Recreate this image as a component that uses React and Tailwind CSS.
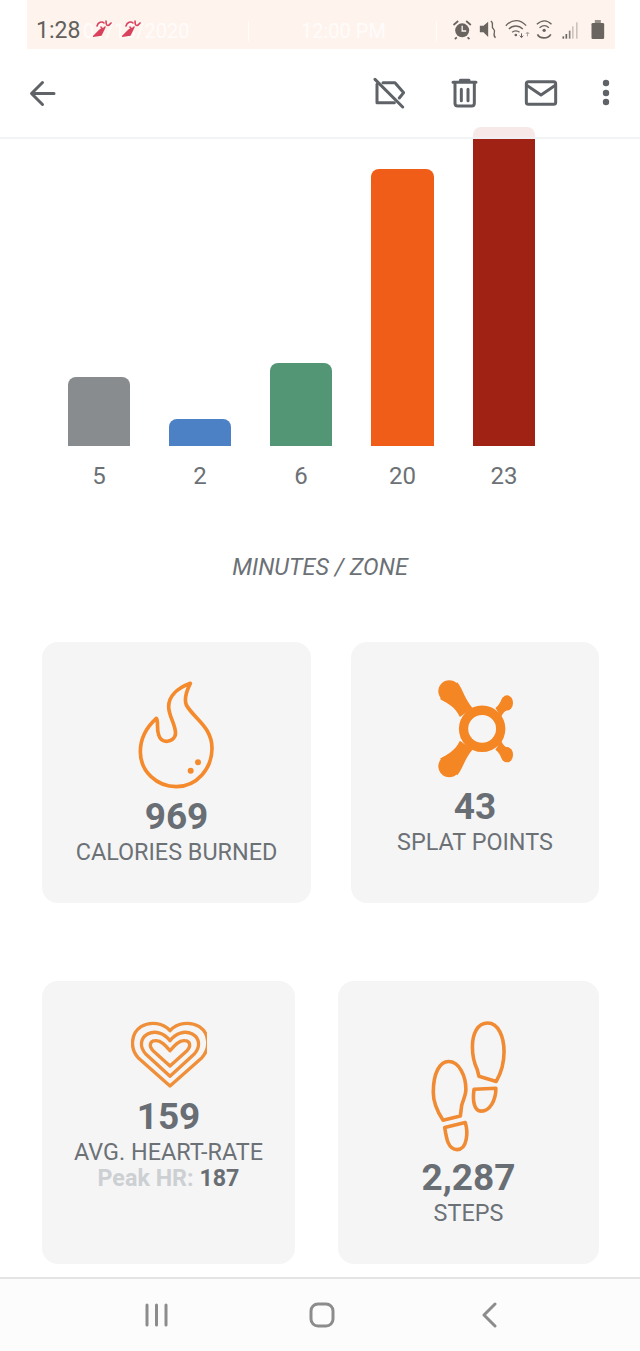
const bars = [
  { value: 5, height: "h-[69px]", width: "w-[62px]", color: "bg-[#888c8f]" },
  { value: 2, height: "h-[27px]", width: "w-[62px]", color: "bg-[#4c81c6]" },
  { value: 6, height: "h-[83px]", width: "w-[62px]", color: "bg-[#529676]" },
  { value: 20, height: "h-[277px]", width: "w-[63px]", color: "bg-[#f05d19]" },
  { value: 23, height: "h-[319px]", width: "w-[62px]", color: "bg-[#a02214]" },
];

function Runner() {
  return (
    <svg width="19" height="17" viewBox="0 0 19 17" fill="none" stroke="#d9415c" strokeWidth="1.6" strokeLinecap="round">
      <path d="M1 16 L7 10 L11 9 L8 15 Z" fill="#d9415c" />
      <path d="M4 6 C5 2 9 1 11 3 M8 7 C8 9 11 9 12 7 M13 1 C13 6 15 7 18 3" />
    </svg>
  );
}

function StatusIcons() {
  return (
    <svg width="157" height="24" viewBox="395 55 470 72" fill="#6a6460">
      <circle cx="428" cy="92" r="21" />
      <path d="M428 78 V94 H440" stroke="#fef3ed" strokeWidth="4" fill="none" />
      <path d="M402 76 L416 64 M454 76 L440 64 M412 113 L406 118 M444 113 L450 118" stroke="#6a6460" strokeWidth="5" />
      <path d="M481 78 H492 L506 66 V112 L492 98 H481 Z" />
      <path d="M514 64 C526 72 512 80 522 88 C532 96 516 104 528 114" stroke="#6a6460" strokeWidth="4" fill="none" />
      <g stroke="#6a6460" strokeWidth="4" fill="none">
        <path d="M559 78 C578 58 602 58 620 78 M568 88 C580 76 598 76 610 88 M578 98 C584 92 594 92 600 98" />
        <path d="M652 74 C668 60 682 60 696 74 M660 84 C670 76 680 76 688 84" />
        <path d="M654 104 C660 118 686 118 694 104" strokeWidth="5" />
      </g>
      <circle cx="589" cy="106" r="4" />
      <path d="M606 101 V113 M601 108 L606 114 L611 108" stroke="#6a6460" strokeWidth="3" fill="none" />
      <path d="M624 110 V98 M619 103 L624 97 L629 103" stroke="#a9a5a1" strokeWidth="3" fill="none" />
      <circle cx="674" cy="92" r="5" />
      <rect x="729" y="110" width="5" height="7" />
      <rect x="738" y="103" width="5" height="14" />
      <rect x="748" y="93" width="5" height="24" opacity="0.8" />
      <rect x="758" y="80" width="4" height="37" opacity="0.4" />
      <rect x="770" y="68" width="4" height="49" opacity="0.4" />
      <rect x="816" y="70" width="38" height="48" rx="4" />
      <rect x="826" y="61" width="18" height="9" opacity="0.7" />
    </svg>
  );
}

function BackIcon() {
  return (
    <svg width="27" height="27" viewBox="0 0 27 27" fill="none" stroke="#5f6368" strokeWidth="3" strokeLinecap="round" strokeLinejoin="round">
      <path d="M25 13.5 H3 M13.5 2.5 L2.5 13.5 L13.5 24.5" />
    </svg>
  );
}

function LabelOffIcon() {
  return (
    <svg width="32" height="32" viewBox="158 234 96 96" fill="none" stroke="#5f6368" strokeWidth="9" strokeLinecap="round" strokeLinejoin="round">
      <path d="M188 251 H224 L250 281 L237 297 M222 311 H170 V256" />
      <path d="M164 241 L247 324" />
    </svg>
  );
}

function TrashIcon() {
  return (
    <svg width="28" height="32" viewBox="394 234 84 96" fill="none" stroke="#5f6368" strokeWidth="9" strokeLinecap="round" strokeLinejoin="round">
      <path d="M400 247 H469 M422 241 H448" />
      <path d="M406 250 V310 Q406 318 414 318 H456 Q464 318 464 310 V250" />
      <path d="M425 268 V302 M445 268 V302" />
    </svg>
  );
}

function MailIcon() {
  return (
    <svg width="34" height="28" viewBox="610 238 102 84" fill="none" stroke="#5f6368" strokeWidth="9" strokeLinejoin="round">
      <rect x="617" y="246" width="88" height="68" rx="6" />
      <path d="M618 257 L661 286 L704 257" />
    </svg>
  );
}

function MoreIcon() {
  return (
    <svg width="8" height="28" viewBox="0 0 8 28" fill="#5f6368">
      <circle cx="4" cy="4" r="3.2" />
      <circle cx="4" cy="14" r="3.2" />
      <circle cx="4" cy="23" r="3.2" />
    </svg>
  );
}

function FlameIcon() {
  return (
    <svg width="80" height="110" viewBox="320 120 240 330" fill="none" stroke="#f58a2c" strokeWidth="11" strokeLinejoin="round">
      <path d="M480 130 C440 145 415 170 415 200 C415 230 440 260 435 285 C430 305 395 315 385 285 C378 265 385 245 378 235 C345 265 330 295 330 335 C330 395 380 440 438 440 C500 440 545 385 545 325 C545 260 490 235 468 195 C460 175 470 150 480 130 Z" />
      <circle cx="503" cy="367" r="9" fill="#f58a2c" stroke="none" />
      <circle cx="481" cy="392" r="9" fill="#f58a2c" stroke="none" />
    </svg>
  );
}

function SplatIcon() {
  return (
    <svg width="83" height="107" viewBox="280 110 250 320" fill="#f58624">
      <circle cx="425" cy="268" r="56" fill="none" stroke="#f58624" strokeWidth="28" />
      <circle cx="326" cy="155" r="33" />
      <path d="M350 128 C368 150 372 178 396 205 L358 232 C342 200 322 192 298 178 Z" />
      <circle cx="326" cy="381" r="33" />
      <path d="M350 408 C368 386 372 358 396 331 L358 304 C342 336 322 344 298 358 Z" />
      <ellipse cx="500" cy="190" rx="18" ry="23" />
      <path d="M488 172 C480 185 478 195 465 205 L482 232 C490 215 498 212 512 205 Z" />
      <ellipse cx="500" cy="346" rx="18" ry="23" />
      <path d="M488 364 C480 351 478 341 465 331 L482 304 C490 321 498 324 512 331 Z" />
    </svg>
  );
}

function HeartIcon() {
  return (
    <svg width="76" height="68" viewBox="15 10 228 204" fill="none" stroke="#ef8f39" strokeWidth="10" strokeLinejoin="round">
      <path d="M132 208 L38 125 C10 95 15 50 45 30 C75 12 112 20 132 42 C152 20 190 12 220 30 C250 50 255 95 226 125 Z" />
      <path d="M132 179 L60 113 C40 92 42 65 65 52 C88 40 115 50 132 72 C149 50 176 40 199 52 C222 65 224 92 204 113 Z" />
      <path d="M132 148 L82 103 C67 88 72 72 88 72 C105 70 120 88 132 102 C144 88 159 70 176 72 C192 72 197 88 182 103 Z" />
    </svg>
  );
}

function StepsIcon() {
  return (
    <svg width="75" height="132" viewBox="298 132 230 396" fill="none" stroke="#f08a33" strokeWidth="11" strokeLinejoin="round">
      <path d="M335 435 C325 420 305 390 305 350 C305 290 325 255 352 255 C385 255 405 300 405 340 C405 360 395 375 392 390 L388 422 Z" />
      <path d="M340 457 L403 442 C412 470 410 525 378 525 C350 525 345 490 340 457 Z" />
      <path d="M445 300 L440 280 C430 260 425 240 425 210 C425 170 440 137 472 137 C505 137 522 180 522 225 C522 260 510 295 498 316 Z" />
      <path d="M430 340 L497 337 C497 375 478 407 452 407 C430 407 425 375 430 340 Z" />
    </svg>
  );
}

function StatCard({ className, numberClass, icon, value, label, children }) {
  return (
    <div className={`flex flex-col items-center rounded-[16px] bg-[#f5f5f6] ${className}`}>
      {icon}
      <p className={`text-[37px] leading-[42px] font-bold text-[#686e74] ${numberClass}`}>{value}</p>
      <p className="text-[23.4px] leading-[28px] text-[#6c7176]">{label}</p>
      {children}
    </div>
  );
}

export default function App() {
  return (
    <div className="flex h-[1351px] w-[640px] flex-col overflow-hidden bg-white font-['Roboto',sans-serif]">
      <div className="h-[49px] shrink-0 pr-[25px] pl-[27px]">
        <div className="flex h-full items-center bg-[#fef3ed] pt-[13px] pl-[9px] whitespace-nowrap text-white">
          <span className="w-[47px] text-[23px] text-[#625f5d]">1:28</span>
          <div className="relative w-[165px] text-[20px]">
            <span className="opacity-80">01/13/2020</span>
            <div className="absolute top-[4px] left-[10px] flex gap-[10px]">
              <Runner />
              <Runner />
            </div>
          </div>
          <div className="h-[20px] w-px bg-white/70" />
          <span className="ml-[52px] w-[83px] text-[20px] opacity-80">12:00 PM</span>
          <div className="ml-[52px] h-[20px] w-px bg-white/70" />
          <div className="ml-[14px] -translate-y-[1px]">
            <StatusIcons />
          </div>
        </div>
      </div>

      <header className="relative z-10 flex h-[90px] shrink-0 items-center border-b-2 border-[#eef0f2]/80 bg-white/90 pr-[30px] pl-[29px]">
        <BackIcon />
        <div className="ml-auto flex items-center">
          <LabelOffIcon />
          <div className="ml-[46px] translate-y-[1px]"><TrashIcon /></div>
          <div className="ml-[45px]"><MailIcon /></div>
          <div className="ml-[44px]"><MoreIcon /></div>
        </div>
      </header>

      <div className="-mt-[12px] flex h-[319px] shrink-0 items-end gap-[39px] pl-[68px]">
        {bars.map((bar) => (
          <div key={bar.value} className={`rounded-t-[8px] ${bar.height} ${bar.width} ${bar.color}`} />
        ))}
      </div>
      <div className="mt-[15px] flex gap-[39px] pl-[68px]">
        {bars.map((bar) => (
          <span key={bar.value} className={`text-center text-[24px] leading-[30px] text-[#6c7176] ${bar.width}`}>
            {bar.value}
          </span>
        ))}
      </div>
      <p className="mt-[61px] text-center text-[23.4px] leading-[30px] text-[#6c7176] italic">MINUTES / ZONE</p>

      <div className="mt-[60px] flex gap-[40px] pl-[42px]">
        <StatCard className="h-[261px] w-[269px] pt-[38px]" numberClass="mt-[6px]" icon={<FlameIcon />} value="969" label="CALORIES BURNED" />
        <StatCard className="h-[261px] w-[248px] pt-[34px]" numberClass="mt-[3px]" icon={<SplatIcon />} value="43" label="SPLAT POINTS" />
      </div>

      <div className="mt-[78px] flex gap-[43px] pl-[42px]">
        <StatCard className="h-[283px] w-[253px] pt-[39px]" numberClass="mt-[8px]" icon={<HeartIcon />} value="159" label="AVG. HEART-RATE">
          <p className="text-[23.3px] leading-[25px] font-bold text-[#cdd0d3]">
            Peak HR: <span className="text-[#686e74]">187</span>
          </p>
        </StatCard>
        <StatCard className="h-[283px] w-[261px] pt-[39px]" numberClass="mt-[5px]" icon={<StepsIcon />} value="2,287" label="STEPS" />
      </div>

      <nav className="relative mt-[13px] flex flex-1 items-center border-t-2 border-[#e4e4e4] bg-[#fcfcfc] pl-[145px]">
        <svg width="23" height="24" viewBox="0 0 23 24" stroke="#8c8c8c" strokeWidth="3" strokeLinecap="round">
          <path d="M2 2 V22 M11.5 2 V22 M21 2 V22" />
        </svg>
        <svg className="ml-[141px]" width="26" height="26" viewBox="0 0 26 26" fill="none" stroke="#8c8c8c" strokeWidth="3">
          <rect x="2" y="2" width="22" height="22" rx="7" />
        </svg>
        <svg className="ml-[146px]" width="17" height="26" viewBox="0 0 17 26" fill="none" stroke="#8c8c8c" strokeWidth="3" strokeLinecap="round" strokeLinejoin="round">
          <path d="M14 2 L3 13 L14 24" />
        </svg>
      </nav>
    </div>
  );
}
